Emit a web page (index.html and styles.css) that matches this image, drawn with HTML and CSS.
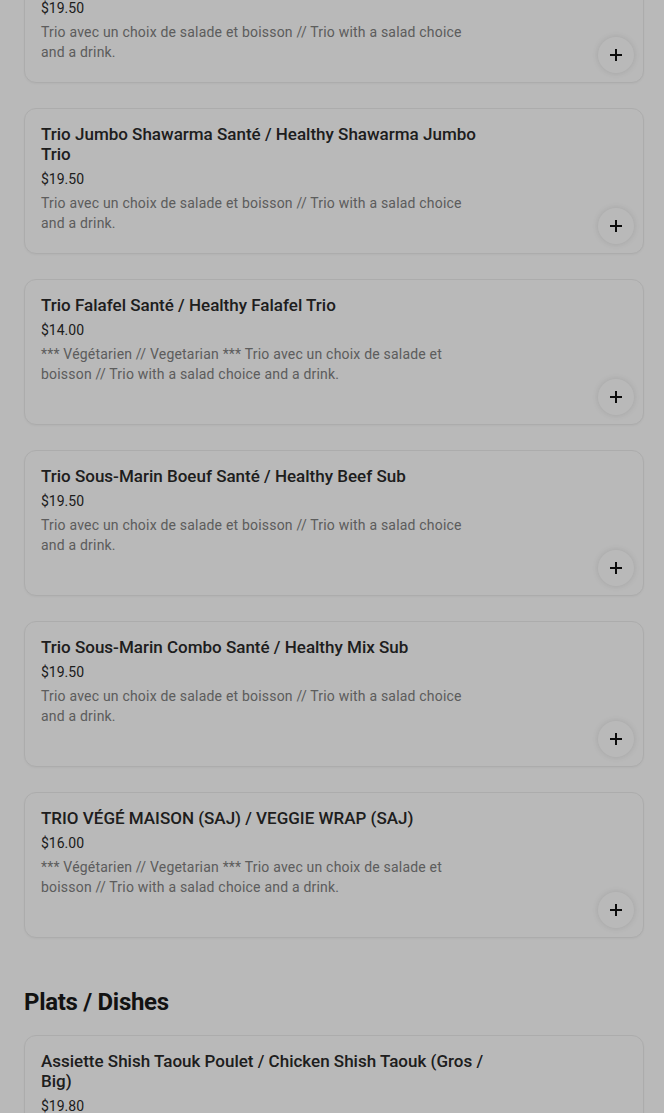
FILE: index.html
```html
<!DOCTYPE html>
<html lang="en">
<head>
  <meta charset="UTF-8">
  <meta name="viewport" content="width=device-width, initial-scale=1.0">
  <title>Menu</title>
  <link rel="stylesheet" href="styles.css">
</head>
<body>
  <main class="menu">
    <section class="menu-section first">
      <ul class="item-list">
        <li class="item">
          <div class="item-info">
            <h3 class="item-name">Trio Shawarma Poulet Santé / Healthy Chicken Shawarma Trio</h3>
            <div class="item-price">$19.50</div>
            <p class="item-desc">Trio avec un choix de salade et boisson // Trio with a salad choice and a drink.</p>
          </div>
          <button class="add-btn" aria-label="Add"><svg viewBox="0 0 12 12" width="12" height="12"><path d="M6 0v12M0 6h12" stroke="currentColor" stroke-width="2"/></svg></button>
        </li>
        <li class="item">
          <div class="item-info">
            <h3 class="item-name">Trio Jumbo Shawarma Santé / Healthy Shawarma Jumbo Trio</h3>
            <div class="item-price">$19.50</div>
            <p class="item-desc">Trio avec un choix de salade et boisson // Trio with a salad choice and a drink.</p>
          </div>
          <button class="add-btn" aria-label="Add"><svg viewBox="0 0 12 12" width="12" height="12"><path d="M6 0v12M0 6h12" stroke="currentColor" stroke-width="2"/></svg></button>
        </li>
        <li class="item">
          <div class="item-info">
            <h3 class="item-name">Trio Falafel Santé / Healthy Falafel Trio</h3>
            <div class="item-price">$14.00</div>
            <p class="item-desc">*** Végétarien // Vegetarian *** Trio avec un choix de salade et boisson // Trio with a salad choice and a drink.</p>
          </div>
          <button class="add-btn" aria-label="Add"><svg viewBox="0 0 12 12" width="12" height="12"><path d="M6 0v12M0 6h12" stroke="currentColor" stroke-width="2"/></svg></button>
        </li>
        <li class="item">
          <div class="item-info">
            <h3 class="item-name">Trio Sous-Marin Boeuf Santé / Healthy Beef Sub</h3>
            <div class="item-price">$19.50</div>
            <p class="item-desc">Trio avec un choix de salade et boisson // Trio with a salad choice and a drink.</p>
          </div>
          <button class="add-btn" aria-label="Add"><svg viewBox="0 0 12 12" width="12" height="12"><path d="M6 0v12M0 6h12" stroke="currentColor" stroke-width="2"/></svg></button>
        </li>
        <li class="item">
          <div class="item-info">
            <h3 class="item-name">Trio Sous-Marin Combo Santé / Healthy Mix Sub</h3>
            <div class="item-price">$19.50</div>
            <p class="item-desc">Trio avec un choix de salade et boisson // Trio with a salad choice and a drink.</p>
          </div>
          <button class="add-btn" aria-label="Add"><svg viewBox="0 0 12 12" width="12" height="12"><path d="M6 0v12M0 6h12" stroke="currentColor" stroke-width="2"/></svg></button>
        </li>
        <li class="item">
          <div class="item-info">
            <h3 class="item-name">TRIO VÉGÉ MAISON (SAJ) / VEGGIE WRAP (SAJ)</h3>
            <div class="item-price">$16.00</div>
            <p class="item-desc">*** Végétarien // Vegetarian *** Trio avec un choix de salade et boisson // Trio with a salad choice and a drink.</p>
          </div>
          <button class="add-btn" aria-label="Add"><svg viewBox="0 0 12 12" width="12" height="12"><path d="M6 0v12M0 6h12" stroke="currentColor" stroke-width="2"/></svg></button>
        </li>
      </ul>
    </section>

    <section class="menu-section">
      <h2 class="section-title">Plats / Dishes</h2>
      <ul class="item-list">
        <li class="item">
          <div class="item-info">
            <h3 class="item-name">Assiette Shish Taouk Poulet / Chicken Shish Taouk (Gros / Big)</h3>
            <div class="item-price">$19.80</div>
            <p class="item-desc">Assiette avec riz, salade, frites et sauce à l'ail // Plate with rice, salad, fries and garlic sauce.</p>
          </div>
          <button class="add-btn" aria-label="Add"><svg viewBox="0 0 12 12" width="12" height="12"><path d="M6 0v12M0 6h12" stroke="currentColor" stroke-width="2"/></svg></button>
        </li>
      </ul>
    </section>
  </main>
  <div class="backdrop"></div>
</body>
</html>
```

FILE: styles.css
```css
body {
  margin: 0;
  background-color: #fff;
  font-family: Roboto, "Liberation Sans", sans-serif;
  color: #000;
  overflow: hidden;
}
.menu {
  padding: 0 20px 0 24px;
}
.menu-section.first {
  margin-top: -63px;
}
.section-title {
  margin: 48px 0 17px;
  font-size: 24px;
  line-height: 32px;
  font-weight: 700;
  letter-spacing: -0.3px;
  color: #1a1a1a;
}
.item-list {
  list-style: none;
  margin: 0;
  padding: 0;
  display: flex;
  flex-direction: column;
  gap: 25px;
}
.item {
  position: relative;
  box-sizing: border-box;
  min-height: 146px;
  padding: 15px 16px;
  border: 1px solid #eee;
  border-radius: 12px;
  background-color: #fff;
  box-shadow: 0 1px 2px rgba(0, 0, 0, 0.04);
}
.item-info {
  max-width: 446px;
}
.item-name {
  margin: 0;
  font-size: 17px;
  line-height: 20px;
  font-weight: 500;
  color: #2a2a2a;
}
.item-price {
  margin-top: 5px;
  font-size: 14px;
  line-height: 20px;
  color: #2a2a2a;
}
.item-desc {
  margin: 4px 0 0;
  font-size: 14px;
  line-height: 20px;
  letter-spacing: 0.2px;
  color: #808080;
}
.add-btn {
  position: absolute;
  right: 9px;
  bottom: 9px;
  display: flex;
  align-items: center;
  justify-content: center;
  width: 36px;
  height: 36px;
  padding: 0;
  border: none;
  border-radius: 50%;
  background-color: #fff;
  box-shadow: 0 0 6px rgba(0, 0, 0, 0.12);
  color: #111;
}
.backdrop {
  position: fixed;
  inset: 0;
  background-color: rgba(0, 0, 0, 0.275);
}
```
